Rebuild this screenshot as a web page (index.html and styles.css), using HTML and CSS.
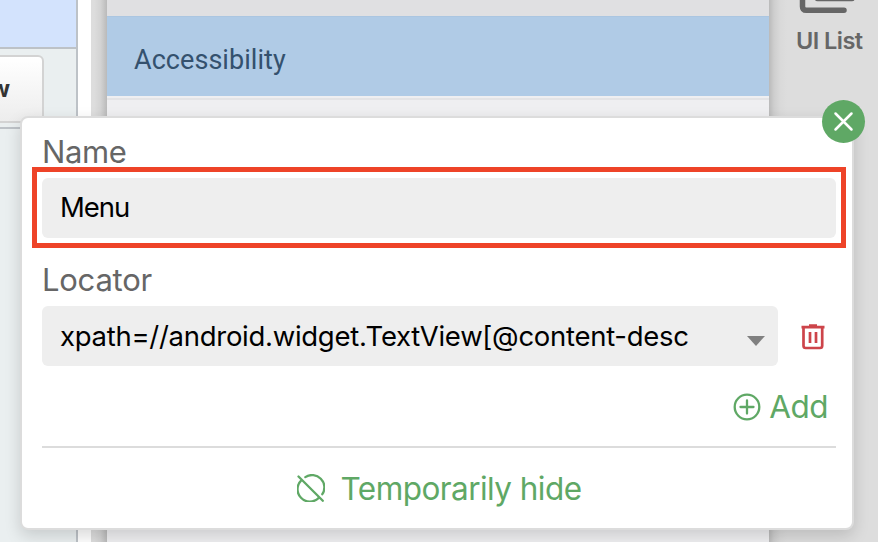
FILE: index.html
```
<!DOCTYPE html>
<html lang="en">
<head>
    <meta charset="UTF-8">
    <title>UI List</title>
    <link rel="stylesheet" href="styles.css">
</head>
<body>
<div class="workspace">
    <div class="side-panel">
        <div class="side-selected"></div>
        <div class="side-toolbar">
            <button class="btn-view">w</button>
        </div>
    </div>
    <div class="gutter"></div>
    <div class="device-edge"></div>
    <div class="device-screen">
        <div class="device-bar"></div>
        <div class="device-item">Accessibility</div>
        <div class="device-divider"></div>
    </div>
    <div class="tool-bar">
        <svg class="icon-list" width="60" height="16" viewBox="0 0 60 16">
            <path d="M3.500 -8V6.500Q3.500 10.300 7.300 10.300H45" />
            <path d="M18.500 -1.500H53" />
        </svg>
        <div class="tool-label">UI List</div>
    </div>
</div>

<div class="popup">
    <button class="btn-close">
        <svg width="43" height="43" viewBox="0 0 43 43">
            <path d="M13.500 13.500L29.500 29.500M29.500 13.500L13.500 29.500" />
        </svg>
    </button>
    <div class="popup-label label-name">Name</div>
    <div class="field field-name">
        <span>Menu</span>
        <div class="highlight"></div>
    </div>
    <div class="popup-label label-locator">Locator</div>
    <div class="locator-row">
        <div class="field field-locator">
            <span>xpath=//android.widget.TextView[@content-desc</span>
            <i class="arrow"></i>
        </div>
        <svg class="icon-trash" width="24" height="26" viewBox="0 0 24 26">
            <path d="M0.500 3.200H23.500M8 1.500H16M2.500 3.200V21.800Q2.500 24 4.700 24H19Q21.200 24 21.200 21.800V3.200M9 8V19M15 8V19" />
        </svg>
    </div>
    <div class="add-row">
        <svg width="28" height="28" viewBox="0 0 28 28">
            <circle cx="14" cy="14" r="12.300" />
            <path d="M14 7.500V20.500M7.500 14H20.500" />
        </svg>
        <span>Add</span>
    </div>
    <div class="hide-row">
        <svg width="28" height="28" viewBox="0 0 28 28">
            <path d="M1.500 2.500L25.800 26.800M8.300 3.100A12.300 12.300 0 0 1 25.300 20.200M4.300 6.300A12.300 12.300 0 0 0 21.500 24.100" />
        </svg>
        <span>Temporarily hide</span>
    </div>
</div>
</body>
</html>
```
FILE: styles.css
```
* {
    margin: 0;
    padding: 0;
    box-sizing: border-box;
}

html,
body {
    width: 100%;
    height: 100%;
    overflow: hidden;
}

body {
    position: relative;
    font-family: Inter, "Liberation Sans", sans-serif;
    background-color: #ffffff;
}

svg {
    display: block;
    fill: none;
    flex-shrink: 0;
}

.workspace {
    display: flex;
    width: 878px;
    height: 542px;
}

/* left panel */
.side-panel {
    width: 78px;
    border-right: 2px solid #bdc2c7;
    background-color: #eaeff0;
    overflow: hidden;
}

.side-selected {
    height: 49px;
    background-color: #d3e3fd;
    border-bottom: 2px solid #bdc2c7;
}

.side-toolbar {
    height: 80px;
    padding-top: 6px;
    border-bottom: 2px solid #bdc2c7;
}

.btn-view {
    display: block;
    width: 104px;
    height: 68px;
    margin-left: -60px;
    padding-right: 32px;
    border: 2px solid #d3d3d3;
    border-radius: 6px;
    background: linear-gradient(#ffffff, #ededed);
    font: bold 23px Inter, sans-serif;
    text-align: right;
    color: #333333;
}

.gutter {
    width: 13px;
    background-color: #ffffff;
}

/* device */
.device-edge {
    width: 16px;
    background: linear-gradient(to right, #dddddd 20%, #d3d3d3 60%, #bababa);
}

.device-screen {
    width: 662px;
    background-color: #efeff1;
}

.device-bar {
    height: 16px;
    background-color: #e0e0e2;
}

.device-item {
    height: 80px;
    padding-left: 27px;
    border-top: 1px solid #abc6e1;
    background-color: #b0cbe6;
    font: 27px/87px Roboto, sans-serif;
    letter-spacing: 0.050px;
    color: #34516e;
}

.device-divider {
    height: 4px;
    border-bottom: 2px solid #e4e4e6;
}

.tool-bar {
    width: 109px;
    background: linear-gradient(to right, #bababa, #cecece 5px, #d9d9d9 11px, #dddddd 18px);
}

.icon-list {
    margin-left: 30px;
    stroke: #666666;
    stroke-width: 5.500;
    stroke-linecap: round;
}

.tool-label {
    padding: 10px 0 0 27px;
    font-size: 23.500px;
    font-weight: 600;
    line-height: 30px;
    letter-spacing: -0.550px;
    white-space: nowrap;
    color: #666666;
}

/* popup over the workspace */
.popup {
    position: absolute;
    left: 20px;
    top: 116px;
    width: 834px;
    height: 414px;
    padding: 14px 16px 0 20px;
    border: 2px solid #dcdcdc;
    border-radius: 8px;
    background-color: #ffffff;
    box-shadow: 0 6px 16px rgba(0, 0, 0, 0.15);
}

.btn-close {
    position: absolute;
    top: -18px;
    right: -13px;
    width: 43px;
    height: 43px;
    border: none;
    border-radius: 50%;
    background-color: #5fa865;
}

.btn-close svg {
    stroke: #ffffff;
    stroke-width: 2.500;
    stroke-linecap: round;
}

.popup-label {
    font-size: 31px;
    line-height: 40px;
    color: #666666;
}

.label-name {
    height: 46px;
    letter-spacing: -0.400px;
}

.label-locator {
    margin-top: 22px;
    height: 46px;
    letter-spacing: -0.250px;
}

.field {
    position: relative;
    height: 60px;
    padding-left: 18px;
    border-radius: 6px;
    background-color: #eeeeee;
    font-size: 27.500px;
    line-height: 60px;
    white-space: nowrap;
    color: #000000;
}

.field-name {
    line-height: 58px;
    letter-spacing: -1px;
}

.highlight {
    position: absolute;
    left: -10px;
    top: -11px;
    right: -10px;
    bottom: -10px;
    border: 5px solid #ee4328;
}

.locator-row {
    display: flex;
    align-items: center;
}

.field-locator {
    display: flex;
    align-items: center;
    justify-content: space-between;
    width: 736px;
    padding-right: 13px;
    letter-spacing: -0.280px;
}

.arrow {
    margin-top: 9px;
    border: 9.500px solid transparent;
    border-top: 10px solid #808080;
    border-bottom: none;
}

.icon-trash {
    margin-top: 2px;
    margin-left: 23px;
    stroke: #cd444a;
    stroke-width: 2.700;
}

.add-row,
.hide-row {
    display: flex;
    align-items: center;
    font-size: 31.500px;
    line-height: 40px;
    letter-spacing: -0.550px;
    color: #5fa865;
}

.add-row svg,
.hide-row svg {
    stroke: #5fa865;
    stroke-width: 2.300;
    stroke-linecap: round;
}

.add-row {
    justify-content: flex-end;
    height: 82px;
    padding-top: 2px;
    gap: 8px;
    padding-right: 8px;
    border-bottom: 2px solid #dcdcdc;
}

.hide-row {
    justify-content: center;
    height: 80px;
    padding-top: 2px;
    gap: 16px;
}

.hide-row svg {
    margin-top: -2px;
}
```
